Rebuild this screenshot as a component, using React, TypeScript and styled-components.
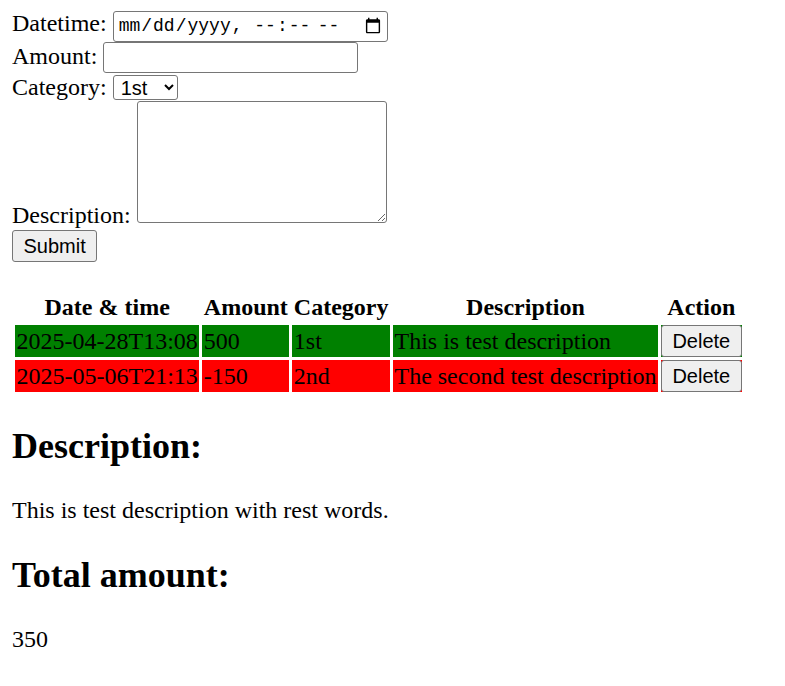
import React from "react";
import styled, { createGlobalStyle } from "styled-components";

const GlobalStyle = createGlobalStyle`
  html, body { background: #ffffff; }
  body {
    margin: 9px 12px 12px 12px;
    font-family: "Liberation Serif", "Times New Roman", serif;
    font-size: 24px;
    color: #000000;
  }
`;

const Form = styled.form`
  display: block;
  margin: 0;
`;

const FieldRow = styled.div`
  display: block;
  line-height: 28.4px;
`;

const controlBase = `
  box-sizing: border-box;
  border: 1.5px solid #767676;
  border-radius: 3px;
  background: #ffffff;
  color: #000000;
  margin: 0;
`;

const DateInput = styled.input`
  ${controlBase}
  width: 275px;
  height: 31px;
  padding: 1.5px 3px 1.5px 4px;
  font-family: "Liberation Mono", "DejaVu Sans Mono", monospace;
  font-size: 18px;
`;

const TextInput = styled.input`
  ${controlBase}
  width: 255px;
  height: 31px;
  padding: 1.5px 3px;
  font-family: "Liberation Sans", Arial, sans-serif;
  font-size: 20px;
`;

const Select = styled.select`
  ${controlBase}
  width: 65px;
  height: 25px;
  padding: 0 3px;
  font-family: "Liberation Sans", Arial, sans-serif;
  font-size: 20px;
`;

const TextArea = styled.textarea`
  ${controlBase}
  width: 250px;
  height: 122px;
  padding: 3px;
  font-family: "Liberation Mono", monospace;
  font-size: 20px;
`;

const Button = styled.button`
  box-sizing: border-box;
  margin: 0;
  padding: 3px 10.5px;
  height: 32px;
  border: 1.5px solid #767676;
  border-radius: 3px;
  background: #efefef;
  color: #000000;
  font-family: "Liberation Sans", Arial, sans-serif;
  font-size: 20px;
  line-height: 23px;
`;

const SubmitRow = styled.div`
  display: block;
  margin-top: 1px;
`;

const Table = styled.table`
  margin-top: 27px;
  border-collapse: separate;
  border-spacing: 3px;
  margin-left: 0;
`;

const HeadCell = styled.th`
  padding: 1.5px;
  font-weight: bold;
  text-align: center;
`;

const Row = styled.tr<{ $bg: string }>`
  background: ${(p) => p.$bg};
`;

const Cell = styled.td`
  padding: 1.5px;
  text-align: left;
`;

const ActionCell = styled.td`
  padding: 0;
`;

const Heading = styled.h2`
  font-size: 36px;
  font-weight: bold;
  margin: 30px 0;
`;

const Paragraph = styled.p`
  margin: 24px 0;
`;

type Entry = {
  datetime: string;
  amount: number;
  category: string;
  description: string;
};

const entries: Entry[] = [
  { datetime: "2025-04-28T13:08", amount: 500, category: "1st", description: "This is test description" },
  { datetime: "2025-05-06T21:13", amount: -150, category: "2nd", description: "The second test description" },
];

export default function App() {
  const total = entries.reduce((s, e) => s + e.amount, 0);
  return (
    <>
      <GlobalStyle />
      <Form onSubmit={(e) => e.preventDefault()}>
        <FieldRow>
          Datetime:{" "}
          <DateInput type="datetime-local" />
        </FieldRow>
        <FieldRow>
          Amount:{" "}
          <TextInput type="number" />
        </FieldRow>
        <FieldRow>
          Category:{" "}
          <Select defaultValue="1st">
            <option value="1st">1st</option>
            <option value="2nd">2nd</option>
          </Select>
        </FieldRow>
        <FieldRow>
          Description:{" "}
          <TextArea />
        </FieldRow>
        <SubmitRow>
          <Button type="submit">Submit</Button>
        </SubmitRow>
      </Form>
      <Table>
        <thead>
          <tr>
            <HeadCell>Date &amp; time</HeadCell>
            <HeadCell>Amount</HeadCell>
            <HeadCell>Category</HeadCell>
            <HeadCell>Description</HeadCell>
            <HeadCell>Action</HeadCell>
          </tr>
        </thead>
        <tbody>
          {entries.map((e) => {
            const bg = e.amount >= 0 ? "#008000" : "#ff0000";
            return (
              <Row key={e.datetime} $bg={bg}>
                <Cell>{e.datetime}</Cell>
                <Cell>{e.amount}</Cell>
                <Cell>{e.category}</Cell>
                <Cell>{e.description}</Cell>
                <ActionCell>
                  <Button type="button">Delete</Button>
                </ActionCell>
              </Row>
            );
          })}
        </tbody>
      </Table>
      <Heading>Description:</Heading>
      <Paragraph>This is test description with rest words.</Paragraph>
      <Heading>Total amount:</Heading>
      <Paragraph>{total}</Paragraph>
    </>
  );
}
